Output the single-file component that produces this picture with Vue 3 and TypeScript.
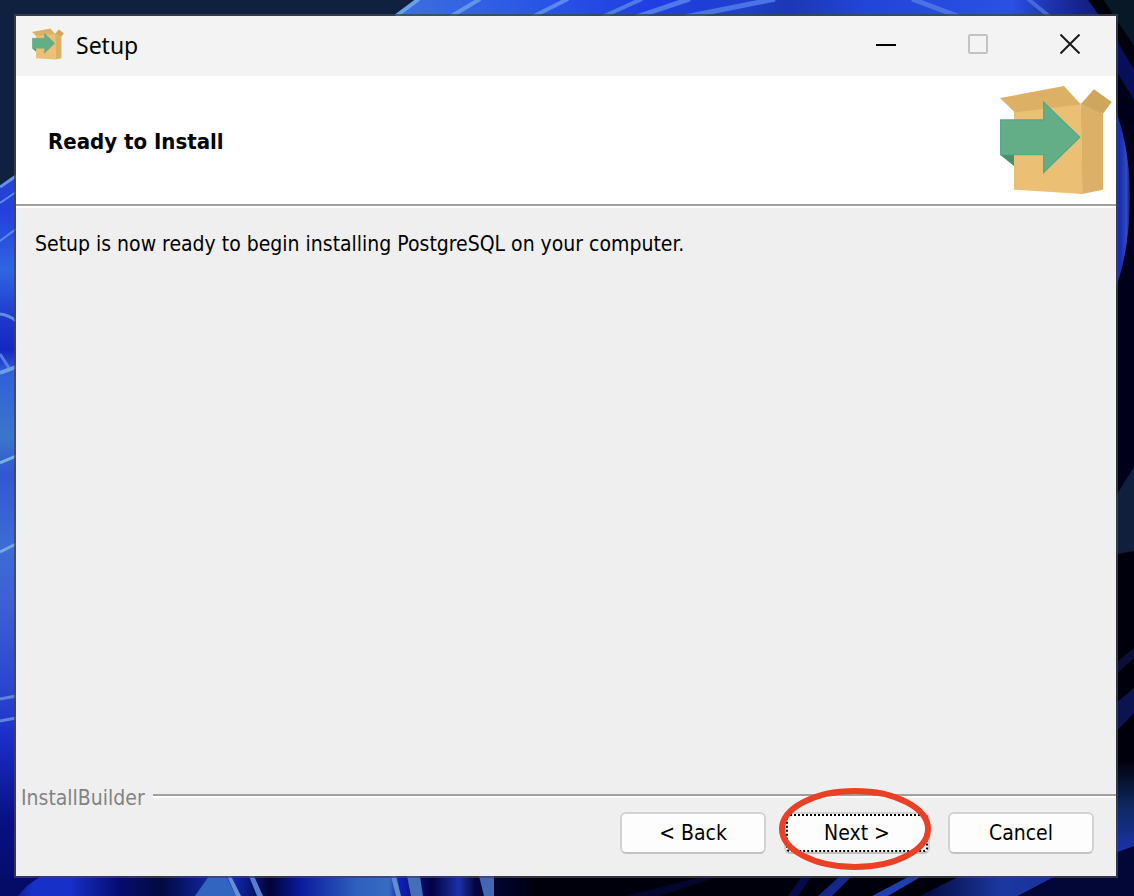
<script setup lang="ts">
import { h, type FunctionalComponent } from 'vue'

interface Streak {
  d: string
  color: string
  width: number
}

const shapes: { points: string; fill: string }[] = [
  { points: '90,120 290,100 296,372 90,359', fill: '#ebc074' },
  { points: '290,103 357,128 357,359 295,372', fill: '#dcb167' },
  { points: '48,84 240,48 290,103 92,127', fill: '#dcb166' },
  { points: '330,58 383,96 357,131 290,103', fill: '#cfa65e' },
  { points: '48,254 90,254 90,288', fill: '#43936a' },
]

const PackageIcon: FunctionalComponent = () =>
  h('svg', { viewBox: '48 48 336 324', 'aria-hidden': 'true' }, [
    ...shapes.map((s) => h('polygon', { points: s.points, fill: s.fill })),
    h('polygon', {
      points: '50,150 179,150 179,97 287,202 179,307 179,254 50,254',
      fill: '#64ae87',
      stroke: '#50ab8a',
      'stroke-width': 4,
    }),
  ])

const streaks: Streak[] = [
  { d: 'M396 16L419 -1', color: '#6ca0e6', width: 4 },
  { d: 'M450 17L480 -1', color: '#6295ea', width: 4 },
  { d: 'M532 17L568 -1', color: '#5a88ec', width: 4 },
  { d: 'M602 17L642 -1', color: '#4f7ae8', width: 4 },
  { d: 'M636 17L690 -1', color: '#4f7ae8', width: 5 },
  { d: 'M685 17L775 -1', color: '#4a74e6', width: 5 },
  { d: 'M912 -1L960 17', color: '#4b72e4', width: 5 },
  { d: 'M1028 -1L1050 17', color: '#4568dd', width: 4 },
  { d: 'M0 187L16 176', color: '#6593e6', width: 3 },
  { d: 'M0 203L16 192', color: '#5b8cec', width: 2 },
  { d: 'M0 241L16 229', color: '#5b8cec', width: 2 },
  { d: 'M0 314Q9 315 16 321', color: '#5f8de0', width: 3 },
  { d: 'M0 354L9 368', color: '#547fe6', width: 3 },
  { d: 'M0 373L16 367', color: '#6b9fe4', width: 4 },
  { d: 'M0 463L16 456', color: '#76b4dc', width: 3 },
  { d: 'M0 552L16 544', color: '#76a9dd', width: 3 },
  { d: 'M0 699L16 696', color: '#5c86da', width: 3 },
  { d: 'M0 721L16 718', color: '#5c86da', width: 3 },
]
</script>

<template>
  <div class="desktop">
    <svg class="wallpaper" viewBox="0 0 1134 896" preserveAspectRatio="none" aria-hidden="true">
      <defs>
        <linearGradient id="left" x1="0" y1="0" x2="0" y2="1">
          <stop offset="0" stop-color="#2547cf" />
          <stop offset="0.06" stop-color="#2340dc" />
          <stop offset="0.14" stop-color="#2f66e0" />
          <stop offset="0.21" stop-color="#1c38c8" />
          <stop offset="0.25" stop-color="#1428bf" />
          <stop offset="0.28" stop-color="#3060d8" />
          <stop offset="0.37" stop-color="#3a76cc" />
          <stop offset="0.42" stop-color="#3157d2" />
          <stop offset="0.52" stop-color="#3b6cd4" />
          <stop offset="0.6" stop-color="#3c60d4" />
          <stop offset="0.74" stop-color="#2540cc" />
          <stop offset="0.78" stop-color="#1a2fc8" />
          <stop offset="0.9" stop-color="#070f82" />
          <stop offset="1" stop-color="#050c68" />
        </linearGradient>
        <linearGradient id="top" x1="0" y1="0" x2="1" y2="0">
          <stop offset="0" stop-color="#3d70de" />
          <stop offset="0.18" stop-color="#2a58e6" />
          <stop offset="0.35" stop-color="#203ee2" />
          <stop offset="0.48" stop-color="#1f3fd0" />
          <stop offset="0.55" stop-color="#1c38b4" />
          <stop offset="0.65" stop-color="#2145d8" />
          <stop offset="0.86" stop-color="#2a50e4" />
          <stop offset="0.92" stop-color="#1c30a8" />
          <stop offset="0.98" stop-color="#101c78" />
          <stop offset="1" stop-color="#02041c" />
        </linearGradient>
        <linearGradient id="bottom" gradientUnits="userSpaceOnUse" x1="0" y1="0" x2="540" y2="0">
          <stop offset="0" stop-color="#060e70" />
          <stop offset="0.06" stop-color="#1630c8" />
          <stop offset="0.13" stop-color="#1630c8" />
          <stop offset="0.22" stop-color="#060c70" />
          <stop offset="0.3" stop-color="#030a40" />
          <stop offset="0.42" stop-color="#1430c4" />
          <stop offset="0.5" stop-color="#020236" />
          <stop offset="0.56" stop-color="#0c1ca0" />
          <stop offset="0.66" stop-color="#2e60bd" />
          <stop offset="0.72" stop-color="#386cc0" />
          <stop offset="0.74" stop-color="#1020b4" />
          <stop offset="0.8" stop-color="#020240" />
          <stop offset="0.85" stop-color="#1c30a8" />
          <stop offset="0.88" stop-color="#050640" />
          <stop offset="0.97" stop-color="#00001c" />
          <stop offset="1" stop-color="#000006" />
        </linearGradient>
        <linearGradient id="corner" gradientUnits="userSpaceOnUse" x1="0" y1="760" x2="0" y2="852">
          <stop offset="0" stop-color="#00000c" />
          <stop offset="0.5" stop-color="#0d2860" />
          <stop offset="1" stop-color="#1c34a8" />
        </linearGradient>
        <linearGradient id="glow" x1="0" y1="0" x2="1" y2="0">
          <stop offset="0" stop-color="#192b92" />
          <stop offset="0.5" stop-color="#1c30b4" />
          <stop offset="0.8" stop-color="#304bbd" />
          <stop offset="1" stop-color="#10186c" />
        </linearGradient>
        <linearGradient id="sweep" x1="0" y1="0" x2="1" y2="0">
          <stop offset="0" stop-color="#04083c" />
          <stop offset="0.6" stop-color="#1c38a0" />
          <stop offset="1" stop-color="#1a2f9c" />
        </linearGradient>
      </defs>
      <rect width="1134" height="896" fill="#10203f" />
      <path d="M0 187L30 168V896H0Z" fill="url(#left)" />
      <path d="M397 16L420 0H1094L1112 16Z" fill="url(#top)" />
      <rect x="1112" y="30" width="22" height="500" fill="#00001a" />
      <path d="M1088 0H1104L1134 46V64Z" fill="#01020c" />
      <path d="M1104 0H1134V46Z" fill="#091827" />
      <path d="M1112 32L1134 70V100L1112 64Z" fill="#080f58" />
      <path d="M1112 100Q1130 145 1130 195Q1130 255 1112 298Z" fill="url(#glow)" />
      <path d="M1112 502L1134 467V551L1112 555Z" fill="#10203c" />
      <path d="M1112 555L1134 551V896H1112Z" fill="#00000c" />
      <path d="M1112 666L1134 648V658L1112 678Z" fill="#0c0e38" />
      <path d="M1112 706L1134 688V713L1112 736Z" fill="#0b1450" />
      <rect x="1112" y="760" width="22" height="94" fill="url(#corner)" />
      <rect y="876" width="540" height="20" fill="url(#bottom)" />
      <path d="M0 876H42Q28 883 18 896H0Z" fill="#050c68" />
      <path d="M195 896L209 876H226L236 896Z" fill="#3265bf" />
      <path d="M227 876H231L241 896H236Z" fill="#6592d4" />
      <path d="M249 876H254L263 896H257Z" fill="#557fcd" />
      <path d="M391 876H396L401 896H396Z" fill="#6090c8" />
      <path d="M407 876H420L423 896H411Z" fill="#426fb8" />
      <path d="M479 876H494V896H484Z" fill="#4167b5" />
      <rect x="540" y="876" width="594" height="20" fill="#00000c" />
      <path d="M625 896L705 876H720L660 896Z" fill="#03052a" />
      <path d="M788 896L802 876H812L798 896Z" fill="#060a4a" />
      <path d="M818 896L840 876H852L832 896Z" fill="#14268a" />
      <path d="M872 896L910 876H922L888 896Z" fill="#213eb0" />
      <path d="M920 896L960 876H1056L1018 896Z" fill="url(#sweep)" />
      <path d="M1018 896L1056 876L1112 854L1134 846V896Z" fill="#020738" />
      <path
        v-for="(s, i) in streaks"
        :key="i"
        :d="s.d"
        :stroke="s.color"
        :stroke-width="s.width"
        fill="none"
      />
    </svg>

    <main class="window">
      <div class="titlebar">
        <PackageIcon class="app-icon" />
        <span class="caption">Setup</span>
        <div class="controls">
          <button type="button" class="control" aria-label="Minimize">
            <svg viewBox="0 0 20 20"><path d="M0 11H20" stroke="#000" stroke-width="2" /></svg>
          </button>
          <button type="button" class="control" aria-label="Maximize" disabled>
            <svg viewBox="0 0 20 20">
              <rect x="1" y="1" width="18" height="18" rx="1" fill="none" stroke="#c3c3c3" stroke-width="2" />
            </svg>
          </button>
          <button type="button" class="control" aria-label="Close">
            <svg viewBox="0 0 20 20">
              <path d="M0.500 0.500L19.500 19.500M19.500 0.500L0.500 19.500" stroke="#1a1a1a" stroke-width="2" />
            </svg>
          </button>
        </div>
      </div>

      <header class="banner">
        <h1>Ready to Install</h1>
        <PackageIcon class="banner-icon" />
      </header>

      <section class="content">
        <p>Setup is now ready to begin installing PostgreSQL on your computer.</p>
      </section>

      <footer>
        <div class="brand">
          <span>InstallBuilder</span>
          <div class="rule"></div>
        </div>
        <div class="actions">
          <button type="button" class="action">&lt; Back</button>
          <div class="highlighted">
            <button type="button" class="action focused">Next &gt;</button>
            <svg class="ring" viewBox="0 0 154 82" aria-hidden="true">
              <ellipse cx="77" cy="41" rx="73" ry="38" fill="none" stroke="#ea4025" stroke-width="6" />
            </svg>
          </div>
          <button type="button" class="action">Cancel</button>
        </div>
      </footer>
    </main>
  </div>
</template>

<style>
body {
  margin: 0;
}
</style>

<style scoped>
.desktop {
  position: relative;
  display: flex;
  min-height: 100vh;
  box-sizing: border-box;
  padding: 14px 16px 18px 14px;
  background: #10203f;
  font-family: Tahoma, "DejaVu Sans Condensed", "DejaVu Sans", sans-serif;
  font-size: 21px;
  line-height: 28px;
  color: #000;
}

.wallpaper {
  position: absolute;
  inset: 0;
  width: 100%;
  height: 100%;
}

.window {
  position: relative;
  flex: 1;
  display: flex;
  flex-direction: column;
  border: 2px solid rgba(66, 68, 78, 0.75);
  background: #efefef;
  background-clip: padding-box;
}

.titlebar {
  display: flex;
  align-items: center;
  height: 60px;
  padding-left: 16px;
  background: #f3f3f3;
}

.app-icon {
  width: 32px;
  height: 32px;
  margin-bottom: 4px;
}

.caption {
  margin-left: 12px;
  padding-bottom: 2px;
  font-family: "Segoe UI", "Noto Sans", sans-serif;
  font-size: 23px;
}

.controls {
  display: flex;
  align-self: stretch;
  margin-left: auto;
}

.control {
  display: flex;
  justify-content: center;
  align-items: center;
  width: 92px;
  padding: 0 0 4px;
  border: 0;
  background: none;
}

.control svg {
  width: 20px;
  height: 20px;
}

.banner {
  display: flex;
  justify-content: space-between;
  align-items: center;
  height: 128px;
  padding: 0 4px 0 32px;
  border-bottom: 2px solid #a0a0a0;
  background: #fff;
}

h1 {
  margin: 0;
  padding-top: 4px;
  font-size: 22px;
  font-weight: 700;
}

.banner-icon {
  width: 112px;
  height: 108px;
}

.content {
  flex: 1;
  padding: 22px 19px;
  border-top: 2px solid #fff;
}

.content p {
  margin: 0;
}

.brand {
  display: flex;
  align-items: center;
  gap: 8px;
  padding-left: 5px;
  color: #838383;
}

.rule {
  flex: 1;
  height: 2px;
  margin-bottom: 6px;
  background: #a0a0a0;
  box-shadow: 0 2px #fff;
}

.actions {
  display: flex;
  justify-content: flex-end;
  gap: 18px;
  padding: 0 22px 22px;
}

.action {
  width: 146px;
  height: 42px;
  padding: 0;
  border: 2px solid #d2d2d2;
  border-bottom-color: #c2c2c2;
  border-radius: 6px;
  background: #fdfdfd;
  color: #000;
  font: inherit;
}

.focused {
  outline: 2px dotted #000;
  outline-offset: -4px;
}

.highlighted {
  position: relative;
}

.ring {
  position: absolute;
  top: -24px;
  left: -6px;
  width: 154px;
  height: 82px;
  pointer-events: none;
}
</style>
